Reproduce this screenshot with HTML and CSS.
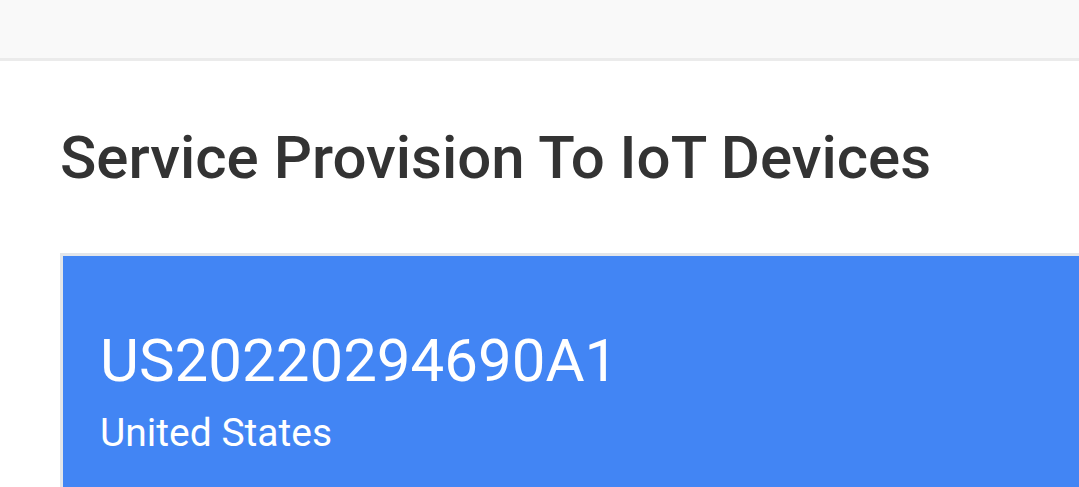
FILE: index.html
```html
<!DOCTYPE html>
<html lang="en">
<head>
    <meta charset="UTF-8">
    <meta name="viewport" content="width=device-width, initial-scale=1.0">
    <title>Service Provision To IoT Devices</title>
    <link rel="stylesheet" href="styles.css">
</head>
<body>

<header class="topbar"></header>

<main class="content">
    <h1 class="title">Service Provision To IoT Devices</h1>
    <section class="card">
        <div class="card-number">US20220294690A1</div>
        <div class="card-country">United States</div>
    </section>
</main>

</body>
</html>
```

FILE: styles.css
```css
* {
    box-sizing: border-box;
}
body {
    font-family: Roboto, "Liberation Sans", sans-serif;
    margin: 0;
    padding: 0;
    background: #fff;
    overflow: hidden;
}
.topbar {
    height: 61px;
    background: #f9f9f9;
    border-bottom: 3px solid #ebebeb;
}
.content {
    padding: 0 0 0 60px;
}
.title {
    margin: 0;
    padding-top: 62px;
    font-size: 60px;
    font-weight: 500;
    line-height: 70px;
    color: #333;
}
.card {
    margin-top: 60px;
    background: #4285f4;
    border: 3px solid #e3e6ea;
    border-right: 0;
    border-bottom: 0;
    padding: 70px 0 40px 37px;
    color: #fff;
}
.card-number {
    font-size: 60px;
    line-height: 70px;
}
.card-country {
    margin-top: 15px;
    font-size: 39px;
    line-height: 44px;
}
```
